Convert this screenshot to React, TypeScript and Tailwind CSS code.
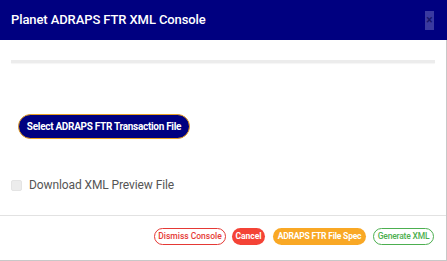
import React from "react";

export default function App() {
  return (
    <div className="w-[447px] h-[261px] bg-white flex flex-col" style={{ fontFamily: "Roboto, 'Liberation Sans', sans-serif" }}>
      <div className="h-[40px] bg-[#000080] flex items-center justify-between pl-[11px] pr-[13px] shrink-0">
        <span className="text-white text-[13px] font-medium tracking-[-0.1px]">Planet ADRAPS FTR XML Console</span>
        <button className="w-[9px] h-[19px] bg-[#3a3aa0] flex items-center justify-center text-[#15156a] text-[12px] font-bold leading-none">×</button>
      </div>
      <div className="flex-1 flex flex-col border-r border-b border-[#c8c8c8]">
        <div className="px-[11px] pt-[20px]">
          <div className="h-[3px] bg-[#ececec] shadow-[0_1px_1px_rgba(0,0,0,0.04)]" />
        </div>
        <div className="pl-[18px] pt-[51px]">
          <button className="h-[25px] w-[172px] rounded-full bg-[#000080] border border-[#e8a020] text-white text-[10px] font-bold tracking-[-0.3px] flex items-center justify-center">
            Select ADRAPS FTR Transaction File
          </button>
        </div>
        <div className="pl-[11px] pt-[37px] flex items-center gap-[7px]">
          <span className="w-[11px] h-[11px] rounded-[2px] bg-[#ececec] border border-[#e4e4e4]" />
          <span className="text-[12px] text-[#555] tracking-[-0.1px]">Download XML Preview File</span>
        </div>
        <div className="mt-[21px] border-t border-[#e2e2e2]" />
        <div className="flex justify-end items-center pr-[12px] pt-[12px]">
          <button className="h-[17px] w-[72px] rounded-full border border-[#e53935] text-[#e53935] text-[8.5px] font-medium flex items-center justify-center">Dismiss Console</button>
          <button className="ml-[6px] h-[17px] w-[33px] rounded-full bg-[#f44336] text-white text-[8.5px] font-bold flex items-center justify-center">Cancel</button>
          <button className="ml-[8px] h-[17px] w-[93px] rounded-full bg-[#f9a825] text-white text-[8.5px] font-bold tracking-[-0.2px] flex items-center justify-center">ADRAPS FTR File Spec</button>
          <button className="ml-[7px] h-[17px] w-[61px] rounded-full border border-[#4caf50] text-[#4caf50] text-[8.5px] font-medium tracking-[-0.2px] flex items-center justify-center">Generate XML</button>
        </div>
      </div>
    </div>
  );
}
